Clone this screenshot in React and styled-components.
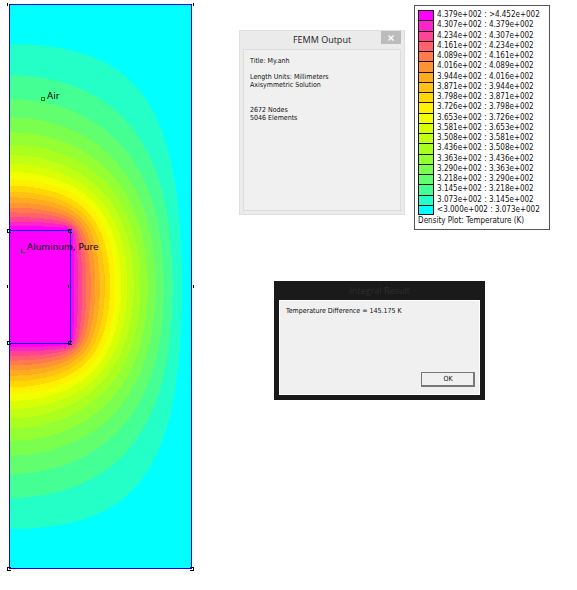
import React, { useMemo } from 'react'
import styled, { createGlobalStyle } from 'styled-components'

const GlobalStyle = createGlobalStyle`
    * {
        box-sizing: border-box;
    }

    body {
        margin: 0;
        background: #fff;
        color: #111;
        font-family: 'DejaVu Sans Condensed', 'DejaVu Sans', sans-serif;
    }
`

const Page = styled.main`
    display: flex;
    align-items: flex-start;
    gap: 45px;
    padding: 3px 27px 16px 7px;
`

const Plot = styled.svg`
    flex: none;
    display: block;
    width: 187px;
    height: 568px;
`

const PlotLabel = styled.text`
    font-family: 'DejaVu Sans', sans-serif;
    font-size: 9px;
    fill: #000;
`

const Side = styled.div`
    flex: 1;
    min-width: 0;
    padding-top: 2px;
`

const TopRow = styled.div`
    display: grid;
    grid-template-columns: 11fr 9fr;
    align-items: start;
    gap: 9px;
`

const OutputWindow = styled.section`
    margin-top: 25px;
    padding: 0 3px 3px;
    background: #ebebeb;
    border: 1px solid #dfdfdf;
`

const OutputHeader = styled.header`
    display: grid;
    grid-template-columns: 20px 1fr 20px;
    align-items: start;
`

const WindowTitle = styled.h2`
    margin: 0;
    font-family: 'Open Sans', 'Noto Sans', sans-serif;
    font-size: 9px;
    font-weight: 400;
    line-height: ${props => props.$height}px;
    text-align: center;
    white-space: nowrap;
    color: ${props => props.$color};
`

const CloseButton = styled.button`
    display: flex;
    align-items: center;
    justify-content: center;
    grid-column: 3;
    height: 13px;
    padding: 0;
    border: 0;
    background: #bcbcbc;
    color: #fff;
`

const OutputBody = styled.div`
    min-height: 162px;
    padding: 7px 6px;
    background: #f0f0f0;
    border: 1px solid #dcdcdc;
`

const Message = styled.p`
    margin: 0 0 ${props => props.$gap || 0}px;
    font-size: 7px;
    line-height: 8px;
    white-space: nowrap;
`

const LegendBox = styled.section`
    padding: 4px 3px 3px;
    border: 1px solid #555;
    background: #fff;
    font-size: 8px;
    white-space: nowrap;
`

const LegendList = styled.ul`
    display: grid;
    grid-auto-rows: 1fr;
    min-height: 205px;
    margin: 0;
    padding: 0;
    list-style: none;
`

const LegendRow = styled.li`
    display: flex;
    align-items: center;
    gap: 3px;
    line-height: 10px;
`

const Swatch = styled.span`
    align-self: stretch;
    width: 16px;
    border: 1px solid #111;
    border-bottom-width: ${props => (props.$last ? 1 : 0)}px;
    background: ${props => props.$color};
`

const LegendCaption = styled.p`
    margin: 1px 0 0;
    line-height: 10px;
`

const ResultWindow = styled.section`
    width: 68%;
    margin: 51px 0 0 35px;
    padding: 0 5px 5px;
    background: #1a1a1a;
`

const ResultBody = styled.div`
    display: flex;
    flex-direction: column;
    justify-content: space-between;
    min-height: 95px;
    padding: 6px 4px 7px 6px;
    border: 1px solid #fff;
    background: #f0f0f0;
`

const OkButton = styled.button`
    align-self: flex-end;
    width: 54px;
    height: 15px;
    padding: 0;
    border: 1px solid #777;
    border-right: 2px solid #777;
    border-bottom: 2px solid #777;
    background: #f0f0f0;
    color: #111;
    font-family: inherit;
    font-size: 7px;
    line-height: 12px;
`

// hottest first
const legend = [
    ['#ff00ff', '4.379e+002 : >4.452e+002'],
    ['#ff24c7', '4.307e+002 : 4.379e+002'],
    ['#ff4493', '4.234e+002 : 4.307e+002'],
    ['#ff616f', '4.161e+002 : 4.234e+002'],
    ['#ff7b4e', '4.089e+002 : 4.161e+002'],
    ['#ff9432', '4.016e+002 : 4.089e+002'],
    ['#ffab1f', '3.944e+002 : 4.016e+002'],
    ['#ffc113', '3.871e+002 : 3.944e+002'],
    ['#ffd804', '3.798e+002 : 3.871e+002'],
    ['#fff200', '3.726e+002 : 3.798e+002'],
    ['#f2ff00', '3.653e+002 : 3.726e+002'],
    ['#d8ff04', '3.581e+002 : 3.653e+002'],
    ['#c1ff13', '3.508e+002 : 3.581e+002'],
    ['#abff1f', '3.436e+002 : 3.508e+002'],
    ['#94ff32', '3.363e+002 : 3.436e+002'],
    ['#7bff4e', '3.290e+002 : 3.363e+002'],
    ['#61ff6f', '3.218e+002 : 3.290e+002'],
    ['#44ff93', '3.145e+002 : 3.218e+002'],
    ['#24ffc7', '3.073e+002 : 3.145e+002'],
    ['#00ffff', '<3.000e+002 : 3.073e+002'],
]

const BANDS = legend.length
const COLS = 182
const ROWS = 282
const CORE_COLS = 61
const CORE_ROWS = 56
const AXIS_X = 9
const MID_Y = 286

// Axisymmetric Laplace equation on the upper half of the domain, solved by
// over-relaxation. 0 is the outer wall, 1 is the aluminium core.
const solveField = () => {
    const w = COLS + 1
    const t = new Float64Array(w * (ROWS + 1))
    for (let j = 0; j <= CORE_ROWS; j++) {
        for (let i = 0; i <= CORE_COLS; i++) t[j * w + i] = 1
    }
    for (let n = 0; n < 500; n++) {
        for (let j = 0; j < ROWS; j++) {
            for (let i = j <= CORE_ROWS ? CORE_COLS + 1 : 0; i < COLS; i++) {
                const k = j * w + i
                const up = t[k + w]
                const down = j === 0 ? up : t[k - w]
                const next = i === 0
                    ? (4 * t[k + 1] + up + down) / 6
                    : (t[k + 1] * (1 + 0.5 / i) + t[k - 1] * (1 - 0.5 / i) + up + down) / 4
                t[k] += 1.97 * (next - t[k])
            }
        }
    }
    return t
}

const temperature = (u, i, j) => {
    const sideways = (i * i) / (i * i + j * j || 1)
    return u + (0.03 + 0.2 * sideways) * u * (1 - u)
}

// one path per colour, made of horizontal runs
const bandPaths = () => {
    const field = solveField()
    const paths = legend.map(() => '')
    for (let y = MID_Y - ROWS; y <= MID_Y + ROWS; y++) {
        const j = Math.abs(y - MID_Y)
        const bandAt = i => {
            const t = temperature(field[j * (COLS + 1) + i], i, j)
            return Math.max(0, Math.min(BANDS - 1, Math.floor(t * BANDS)))
        }
        let start = 0
        for (let i = 1; i <= COLS + 1; i++) {
            if (i > COLS || bandAt(i) !== bandAt(start)) {
                const len = i - start
                paths[BANDS - 1 - bandAt(start)] += `M${AXIS_X + start} ${y}h${len}v1h-${len}z`
                start = i
            }
        }
    }
    return paths
}

const DensityPlot = () => {
    const paths = useMemo(bandPaths, [])
    return (
        <Plot viewBox="7 3 187 568" role="img" aria-label="Temperature density plot">
            <g shapeRendering="crispEdges">
                {paths.map((d, i) => <path key={legend[i][0]} d={d} fill={legend[i][0]} />)}
                <g fill="none" stroke="#0000ff">
                    <path d="M9.5 4.5H191.5V568.5H9.5z" />
                    <path d="M9.5 230.5H70.5V343.5H9.5" />
                </g>
                <g fill="none" stroke="#000">
                    <path d="M11 229.5H7.5V232.5H11M72 229.5H68.5V232.5H72" />
                    <path d="M11 341.5H7.5V344.5H11M72 341.5H68.5V344.5H72" />
                    <path d="M11 567.5H7.5V570.5H11M190 567.5H193.5V570.5H190" />
                    <path d="M7.5 3V6M193.5 3V6M7.5 285V288M68.5 285V288M193.5 285V288" />
                </g>
                <g fill="none" stroke="#008000">
                    <path d="M41.5 97.5h3v3h-3z" />
                    <path d="M21.5 249V252.5H25" />
                </g>
            </g>
            <PlotLabel x="47" y="99">Air</PlotLabel>
            <PlotLabel x="27" y="250">Aluminum, Pure</PlotLabel>
        </Plot>
    )
}

const Legend = () => (
    <LegendBox>
        <LegendList>
            {legend.map(([color, range], i) => (
                <LegendRow key={range}>
                    <Swatch $color={color} $last={i === BANDS - 1} />
                    {range}
                </LegendRow>
            ))}
        </LegendList>
        <LegendCaption>Density Plot: Temperature (K)</LegendCaption>
    </LegendBox>
)

const Output = () => (
    <OutputWindow>
        <OutputHeader>
            <span />
            <WindowTitle $color="#222" $height={18}>FEMM Output</WindowTitle>
            <CloseButton type="button" aria-label="Close">
                <svg width="6" height="6" viewBox="0 0 6 6">
                    <path d="M.5.5l5 5M5.5.5l-5 5" stroke="currentColor" strokeWidth="1.3" />
                </svg>
            </CloseButton>
        </OutputHeader>
        <OutputBody>
            <Message $gap={8}>Title: My.anh</Message>
            <Message>Length Units: Millimeters</Message>
            <Message $gap={17}>Axisymmetric Solution</Message>
            <Message>2672 Nodes</Message>
            <Message>5046 Elements</Message>
        </OutputBody>
    </OutputWindow>
)

const Result = () => (
    <ResultWindow>
        <WindowTitle $color="#2e2e2e" $height={19}>Integral Result</WindowTitle>
        <ResultBody>
            <Message>Temperature Difference = 145.175 K</Message>
            <OkButton type="button">OK</OkButton>
        </ResultBody>
    </ResultWindow>
)

const App = () => (
    <Page>
        <GlobalStyle />
        <DensityPlot />
        <Side>
            <TopRow>
                <Output />
                <Legend />
            </TopRow>
            <Result />
        </Side>
    </Page>
)

export default App
